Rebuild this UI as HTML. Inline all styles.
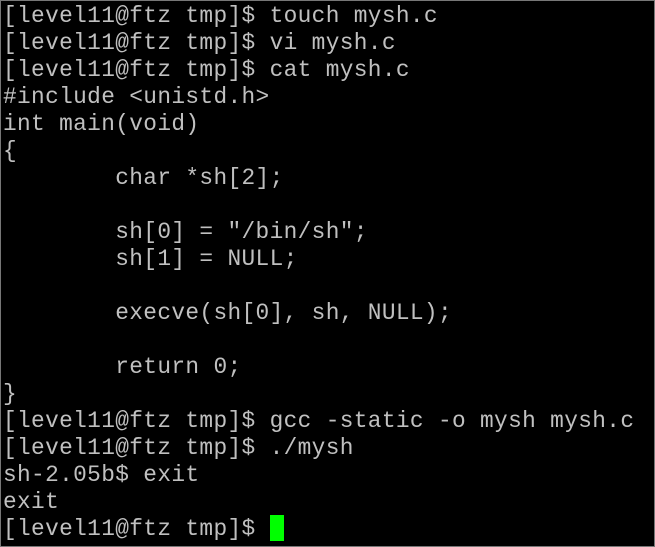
<!DOCTYPE html>
<html><head><style>
html,body{margin:0;padding:0;background:#000;width:655px;height:547px;overflow:hidden}
body{border:1px solid #777;box-sizing:border-box}
pre{margin:0;padding:2px 0 0 2px;font-family:"Liberation Mono",monospace;font-size:22.8px;line-height:27px;letter-spacing:0.35px;color:#c0c0c0;white-space:pre}
.c{display:inline-block;width:14px;height:26px;background:#00ff00;vertical-align:top;margin-top:-1px}
</style></head><body><pre>[level11@ftz tmp]$ touch mysh.c
[level11@ftz tmp]$ vi mysh.c
[level11@ftz tmp]$ cat mysh.c
#include &lt;unistd.h&gt;
int main(void)
{
        char *sh[2];

        sh[0] = "/bin/sh";
        sh[1] = NULL;

        execve(sh[0], sh, NULL);

        return 0;
}
[level11@ftz tmp]$ gcc -static -o mysh mysh.c
[level11@ftz tmp]$ ./mysh
sh-2.05b$ exit
exit
[level11@ftz tmp]$ <span class="c"></span></pre></body></html>
